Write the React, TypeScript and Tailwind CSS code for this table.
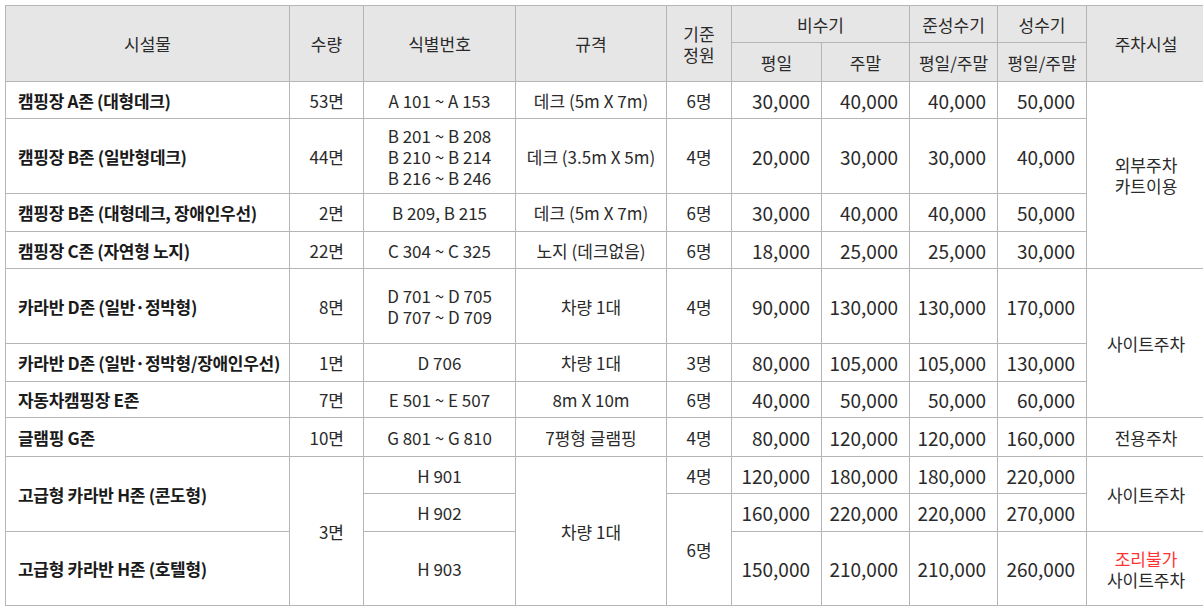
import React from "react";

const F = { fontFamily: '"Noto Sans CJK KR", "Noto Sans", sans-serif' };

const td = "border border-[#b5b5b5] align-middle whitespace-nowrap";
const name = `${td} text-left pl-[12px] font-bold text-[#1a1a1a] tracking-[-0.3px]`;
const qty = `${td} text-right pr-[19px]`;
const center = `${td} text-center`;
const price = `${td} text-right pr-[11px] text-[19px]`;
const th = `${td} text-center font-normal`;

export default function App() {
  return (
    <div className="w-[1203px] h-[610px] overflow-hidden bg-white pt-[5px] pl-[5px]" style={F}>
      <table className="border-collapse table-fixed w-[1220px] text-[17px] leading-[21px] text-[#2a2a2a]">
        <colgroup>
          <col className="w-[284px]" />
          <col className="w-[74px]" />
          <col className="w-[152px]" />
          <col className="w-[151px]" />
          <col className="w-[65px]" />
          <col className="w-[90px]" />
          <col className="w-[88px]" />
          <col className="w-[88px]" />
          <col className="w-[89px]" />
          <col className="w-[139px]" />
        </colgroup>
        <thead>
          <tr className="h-[37px] bg-[#e6e6e6]">
            <th rowSpan={2} className={th}>시설물</th>
            <th rowSpan={2} className={th}>수량</th>
            <th rowSpan={2} className={th}>식별번호</th>
            <th rowSpan={2} className={th}>규격</th>
            <th rowSpan={2} className={th}>기준<br />정원</th>
            <th colSpan={2} className={th}>비수기</th>
            <th className={th}>준성수기</th>
            <th className={th}>성수기</th>
            <th rowSpan={2} className={`${th} pr-[20px]`}>주차시설</th>
          </tr>
          <tr className="h-[39px] bg-[#e6e6e6]">
            <th className={th}>평일</th>
            <th className={th}>주말</th>
            <th className={th}>평일/주말</th>
            <th className={th}>평일/주말</th>
          </tr>
        </thead>
        <tbody>
          <tr className="h-[37px]">
            <td className={name}>캠핑장 A존 (대형데크)</td>
            <td className={qty}>53면</td>
            <td className={center}>A 101 ~ A 153</td>
            <td className={center}>데크 (5m X 7m)</td>
            <td className={center}>6명</td>
            <td className={price}>30,000</td>
            <td className={price}>40,000</td>
            <td className={price}>40,000</td>
            <td className={price}>50,000</td>
            <td rowSpan={4} className={`${center} pr-[20px]`}>외부주차<br />카트이용</td>
          </tr>
          <tr className="h-[75px]">
            <td className={name}>캠핑장 B존 (일반형데크)</td>
            <td className={qty}>44면</td>
            <td className={center}>B 201 ~ B 208<br />B 210 ~ B 214<br />B 216 ~ B 246</td>
            <td className={center}>데크 (3.5m X 5m)</td>
            <td className={center}>4명</td>
            <td className={price}>20,000</td>
            <td className={price}>30,000</td>
            <td className={price}>30,000</td>
            <td className={price}>40,000</td>
          </tr>
          <tr className="h-[38px]">
            <td className={name}>캠핑장 B존 (대형데크, 장애인우선)</td>
            <td className={qty}>2면</td>
            <td className={center}>B 209, B 215</td>
            <td className={center}>데크 (5m X 7m)</td>
            <td className={center}>6명</td>
            <td className={price}>30,000</td>
            <td className={price}>40,000</td>
            <td className={price}>40,000</td>
            <td className={price}>50,000</td>
          </tr>
          <tr className="h-[37px]">
            <td className={name}>캠핑장 C존 (자연형 노지)</td>
            <td className={qty}>22면</td>
            <td className={center}>C 304 ~ C 325</td>
            <td className={center}>노지 (데크없음)</td>
            <td className={center}>6명</td>
            <td className={price}>18,000</td>
            <td className={price}>25,000</td>
            <td className={price}>25,000</td>
            <td className={price}>30,000</td>
          </tr>
          <tr className="h-[75px]">
            <td className={name}>카라반 D존 (일반·정박형)</td>
            <td className={qty}>8면</td>
            <td className={center}>D 701 ~ D 705<br />D 707 ~ D 709</td>
            <td className={center}>차량 1대</td>
            <td className={center}>4명</td>
            <td className={price}>90,000</td>
            <td className={price}>130,000</td>
            <td className={price}>130,000</td>
            <td className={price}>170,000</td>
            <td rowSpan={3} className={`${center} pr-[20px]`}>사이트주차</td>
          </tr>
          <tr className="h-[38px]">
            <td className={name}>카라반 D존 (일반·정박형/장애인우선)</td>
            <td className={qty}>1면</td>
            <td className={center}>D 706</td>
            <td className={center}>차량 1대</td>
            <td className={center}>3명</td>
            <td className={price}>80,000</td>
            <td className={price}>105,000</td>
            <td className={price}>105,000</td>
            <td className={price}>130,000</td>
          </tr>
          <tr className="h-[36px]">
            <td className={name}>자동차캠핑장 E존</td>
            <td className={qty}>7면</td>
            <td className={center}>E 501 ~ E 507</td>
            <td className={center}>8m X 10m</td>
            <td className={center}>6명</td>
            <td className={price}>40,000</td>
            <td className={price}>50,000</td>
            <td className={price}>50,000</td>
            <td className={price}>60,000</td>
          </tr>
          <tr className="h-[39px]">
            <td className={name}>글램핑 G존</td>
            <td className={qty}>10면</td>
            <td className={center}>G 801 ~ G 810</td>
            <td className={center}>7평형 글램핑</td>
            <td className={center}>4명</td>
            <td className={price}>80,000</td>
            <td className={price}>120,000</td>
            <td className={price}>120,000</td>
            <td className={price}>160,000</td>
            <td className={`${center} pr-[20px]`}>전용주차</td>
          </tr>
          <tr className="h-[37px]">
            <td rowSpan={2} className={name}>고급형 카라반 H존 (콘도형)</td>
            <td rowSpan={3} className={qty}>3면</td>
            <td className={center}>H 901</td>
            <td rowSpan={3} className={center}>차량 1대</td>
            <td className={center}>4명</td>
            <td className={price}>120,000</td>
            <td className={price}>180,000</td>
            <td className={price}>180,000</td>
            <td className={price}>220,000</td>
            <td rowSpan={2} className={`${center} pr-[20px]`}>사이트주차</td>
          </tr>
          <tr className="h-[38px]">
            <td className={center}>H 902</td>
            <td rowSpan={2} className={center}>6명</td>
            <td className={price}>160,000</td>
            <td className={price}>220,000</td>
            <td className={price}>220,000</td>
            <td className={price}>270,000</td>
          </tr>
          <tr className="h-[74px]">
            <td className={name}>고급형 카라반 H존 (호텔형)</td>
            <td className={center}>H 903</td>
            <td className={price}>150,000</td>
            <td className={price}>210,000</td>
            <td className={price}>210,000</td>
            <td className={price}>260,000</td>
            <td className={`${center} pr-[20px]`}>
              <span className="text-[#ff3333]">조리불가</span>
              <br />
              사이트주차
            </td>
          </tr>
        </tbody>
      </table>
    </div>
  );
}
